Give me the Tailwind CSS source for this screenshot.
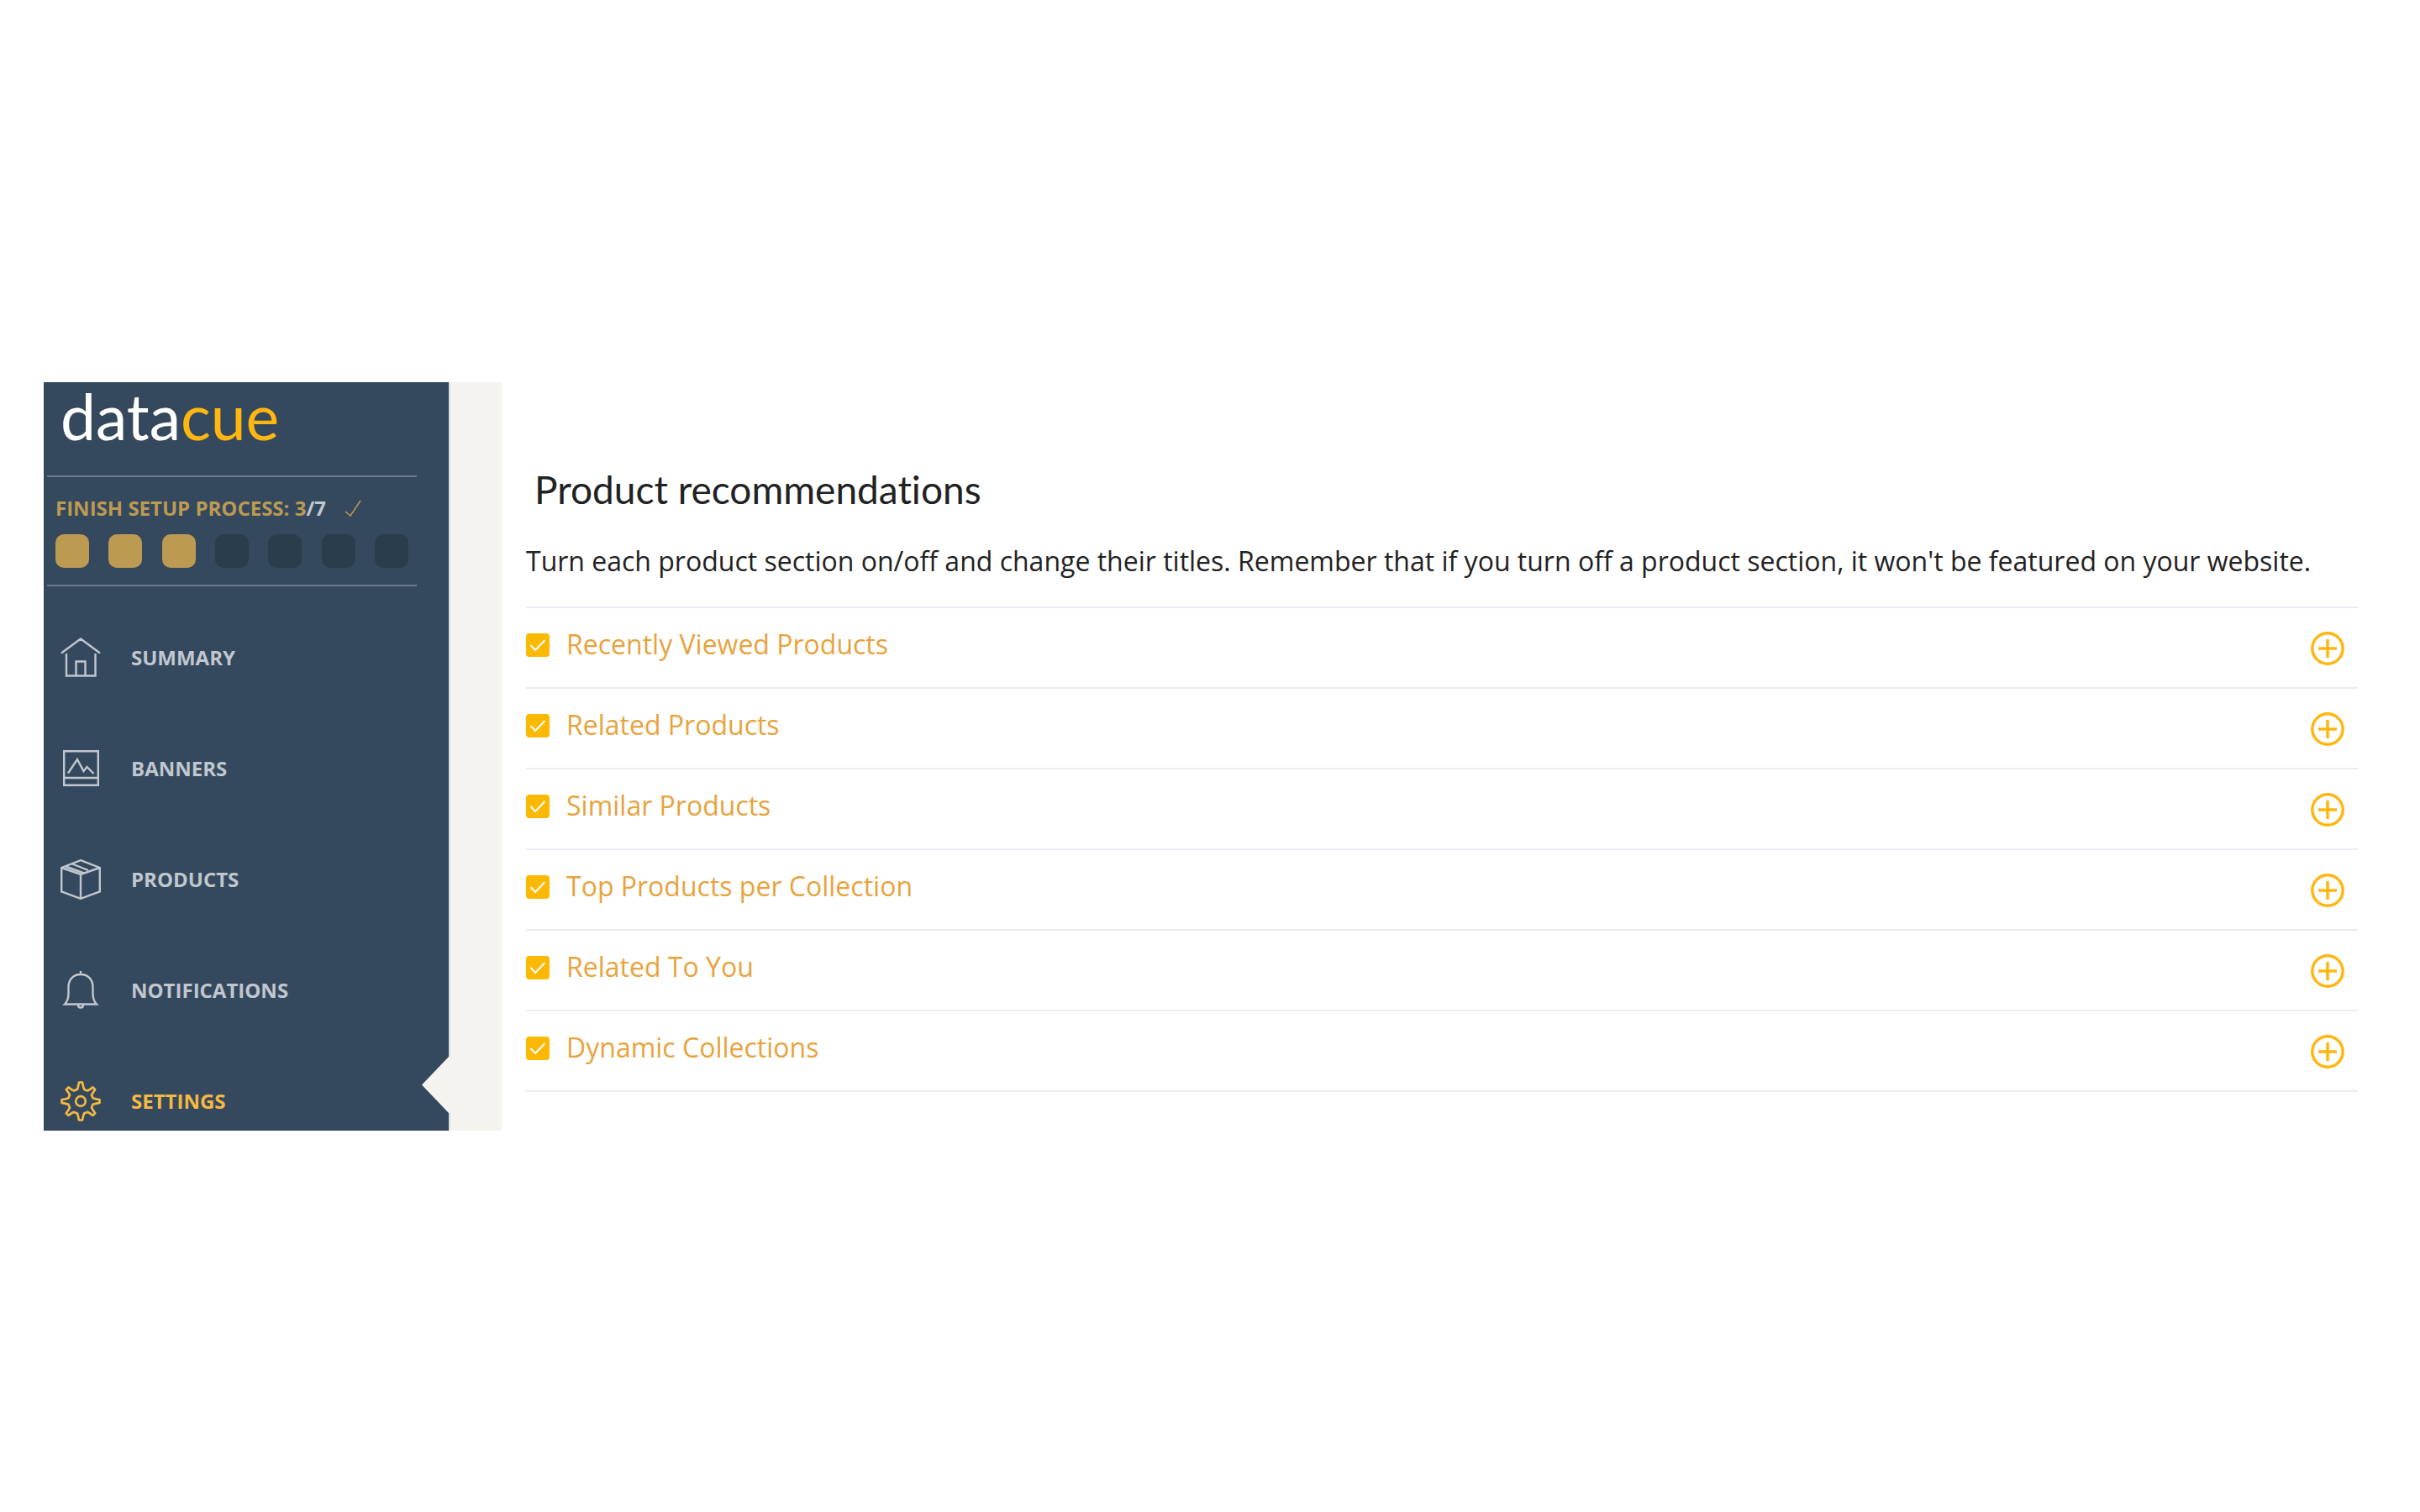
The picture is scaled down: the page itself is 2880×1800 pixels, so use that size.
<!DOCTYPE html>
<html lang="en">
<head>
<meta charset="utf-8">
<title>DataCue – Product recommendations</title>
<script src="https://cdn.jsdelivr.net/npm/@tailwindcss/browser@4"></script>
</head>
<body class="bg-white">
<div class="flex min-h-screen flex-col justify-center pt-px pr-[74px] pl-[52px] font-['Open_Sans',sans-serif]">
  <div class="flex">
    <aside class="relative w-[482px] shrink-0 bg-[#35495e] pl-1">
      <a href="#" class="block h-[111px] pl-4 font-['Lato',sans-serif] text-[75px] leading-[80px] text-white">data<span class="text-[#ffb70f]">cue</span></a>
      <section class="h-[132px] w-[440px] border-t-2 border-b-2 border-[#687b8c] px-[10px] pt-5">
        <div class="flex items-center justify-between pr-14 text-2xl leading-[34px] font-bold text-[#bc9a52]">
          <p>FINISH SETUP PROCESS: 3<span class="text-[#c0c8d0]">/7</span></p>
          <svg class="h-5 w-5" viewBox="0 0 20 20" fill="none" stroke="currentColor" stroke-width="1.5"><path d="M1 14l6 5L19 1"/></svg>
        </div>
        <div class="mt-[14px] flex justify-between">
          <span class="h-10 w-10 rounded-[10px] bg-[#bc9a52]"></span>
          <span class="h-10 w-10 rounded-[10px] bg-[#bc9a52]"></span>
          <span class="h-10 w-10 rounded-[10px] bg-[#bc9a52]"></span>
          <span class="h-10 w-10 rounded-[10px] bg-[#2a3d4c]"></span>
          <span class="h-10 w-10 rounded-[10px] bg-[#2a3d4c]"></span>
          <span class="h-10 w-10 rounded-[10px] bg-[#2a3d4c]"></span>
          <span class="h-10 w-10 rounded-[10px] bg-[#2a3d4c]"></span>
        </div>
      </section>
      <nav class="flex flex-col gap-[84px] pt-[61px] pb-[11px] pl-4 text-2xl font-bold text-[#c0c7cf]">
        <a href="#" class="flex h-12 items-center gap-9">
          <svg class="h-12 w-12" viewBox="0 0 48 48" fill="none" stroke="currentColor" stroke-width="2.4"><path d="M1 18.500L24 1.500l23 17M7 19v26.500h34.500V19M18.500 45V28.500h11V45"/></svg>
          SUMMARY
        </a>
        <a href="#" class="flex h-12 items-center gap-9">
          <svg class="h-12 w-12" viewBox="0 0 48 48" fill="none" stroke="currentColor" stroke-width="2.4"><path d="M4.200 3.200h40.600v40.600H4.200zM4.200 35h40.600M9 29.500L20 13l7.500 14 4-5 8 8"/></svg>
          BANNERS
        </a>
        <a href="#" class="flex h-12 items-center gap-9">
          <svg class="h-12 w-12" viewBox="0 0 48 48" fill="none" stroke="currentColor" stroke-width="2.400"><path d="M24 1.200l22.800 8.800v28.500L24 46.800 1.200 38.500V10zM1.200 10L24 18l22.800-8M24 18v28.500M6 8.500l22 8M14 5.500l19 7.500"/></svg>
          PRODUCTS
        </a>
        <a href="#" class="flex h-12 items-center gap-9">
          <svg class="h-12 w-12" viewBox="0 0 48 48" fill="none" stroke="currentColor" stroke-width="2.400"><path d="M24 1v4M5 40.500h38c-3.500-3.500-4.500-8-4.500-13V20c0-9-6-15-14.500-15S9.500 11 9.500 20v7.500c0 5-1 9.500-4.500 13zM21 41.500c0 4 6 4 6 0"/></svg>
          NOTIFICATIONS
        </a>
        <a href="#" aria-current="page" class="flex h-12 items-center gap-9 text-[#f5b941]">
          <svg class="h-12 w-12" viewBox="0 0 48 48" fill="none" stroke="currentColor" stroke-width="2.700" stroke-linejoin="round"><path d="M22 1.500h4c.8 4 1.200 7 2.200 8.300 1.300.8 2.500 1.200 3.800 1.700 2-.5 4-2.200 6.500-4.100l2.700 2.700c-2.200 3.400-3.600 4.900-4.200 6.400l1.600 3.800c2 .8 4.500 1.300 7.900 1.900v3.600c-3.400.6-5.900 1.100-7.900 2L37 31.600c.8 2 2.200 3.800 4.200 6.700l-2.700 2.600c-3-2.100-4.500-3.400-6.500-4l-4 1.700c-.8 1.700-1.200 4.300-2 7.900h-4c-.8-3.600-1.200-6.200-2-7.900l-4-1.700c-2 .6-3.500 1.900-6.500 4l-2.700-2.600c2-2.900 3.400-4.700 4.200-6.700l-1.600-3.800c-2-.9-4.500-1.400-7.900-2v-3.600c3.400-.6 5.900-1.100 7.900-1.900l1.600-3.800c-.8-2-2.200-3.400-4.200-6.400l2.700-2.700c2.500 1.900 4.500 3.600 6.500 4.100l4-1.700c.8-1.600 1.200-4.300 2-8.300z"/><circle cx="24" cy="24" r="5.800"/></svg>
          SETTINGS
        </a>
      </nav>
      <svg class="absolute -right-0.5 bottom-5 z-10 h-[68px] w-[34px]" viewBox="0 0 34 68" fill="#f4f3ef"><path d="M34 0h-2L0 33.500 32 67h2z"/></svg>
    </aside>
    <div class="w-[63px] shrink-0 border-l-2 border-[#dfdfdd] bg-[#f4f3ef]"></div>
    <main class="min-w-0 flex-1 pt-[98px] pl-[29px]">
      <h1 class="pl-[10px] font-['Lato',sans-serif] text-[46px] leading-[60px] text-[#222] [font-variant-ligatures:no-common-ligatures]">Product recommendations</h1>
      <p class="mt-[31px] text-[32px] leading-[48px] text-[#222]">Turn each product section on/off and change their titles. Remember that if you turn off a product section, it won't be featured on your website.</p>
      <ul id="sections" class="mt-[30px] border-t-2 border-[#e9edf1] text-[32px] leading-[48px] text-[#e8a33d]"></ul>
    </main>
  </div>
</div>
<template id="row">
  <li class="flex h-24 items-start justify-between border-b-2 border-[#e9edf1] pt-[19px] pr-4">
    <label class="flex items-center gap-5">
      <span class="grid h-7 w-7">
        <input type="checkbox" checked class="col-start-1 row-start-1 h-7 w-7 appearance-none rounded-[4px] bg-[#fbb903]">
        <svg class="pointer-events-none col-start-1 row-start-1 h-7 w-7" viewBox="0 0 28 28" fill="none" stroke="#fff" stroke-width="2"><path d="M5.500 14l5.500 6L22.500 8"/></svg>
      </span>
      <span class="name pb-0.5"></span>
    </label>
    <button type="button" class="mt-[9px] h-10 w-10">
      <svg class="h-10 w-10" viewBox="0 0 40 40" fill="none" stroke="#ffb70f" stroke-width="3.500"><circle cx="20" cy="20" r="18.200"/><path d="M9 20h22M20 9v22"/></svg>
    </button>
  </li>
</template>
<script>
  const list = document.getElementById('sections');
  const row = document.getElementById('row');
  ['Recently Viewed Products', 'Related Products', 'Similar Products', 'Top Products per Collection', 'Related To You', 'Dynamic Collections'].forEach(name => {
    const item = row.content.cloneNode(true);
    item.querySelector('.name').textContent = name;
    item.querySelector('button').setAttribute('aria-label', 'Expand ' + name);
    list.append(item);
  });
</script>
</body>
</html>
